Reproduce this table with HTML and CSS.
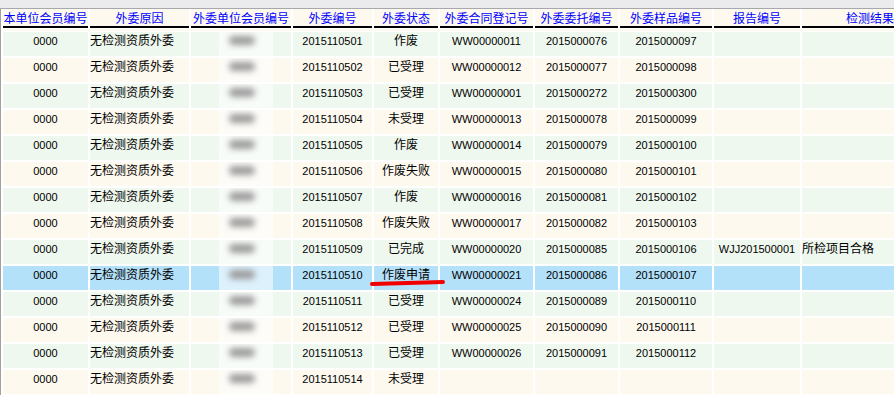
FILE: index.html
```html
<!DOCTYPE html>
<html lang="zh-CN">
<head>
<meta charset="utf-8">
<title>外委列表</title>
<link rel="stylesheet" href="styles.css">
</head>
<body>
<div class="topbar"></div>
<div class="grid">
  <div class="row head">
    <div class="c">本单位会员编号</div><div class="c">外委原因</div><div class="c">外委单位会员编号</div><div class="c">外委编号</div><div class="c">外委状态</div><div class="c">外委合同登记号</div><div class="c">外委委托编号</div><div class="c">外委样品编号</div><div class="c">报告编号</div><div class="c">检测结果描述</div>
  </div>
  <div class="row filler">
    <div class="c"></div><div class="c"></div><div class="c"></div><div class="c"></div><div class="c"></div><div class="c"></div><div class="c"></div><div class="c"></div><div class="c"></div><div class="c"></div>
  </div>

  <div class="row g">
    <div class="c n">0000</div><div class="c t">无检测资质外委</div><div class="c m"><span class="mask"><span class="blob"></span></span></div><div class="c n">2015110501</div><div class="c s">作废</div><div class="c n">WW00000011</div><div class="c n">2015000076</div><div class="c n">2015000097</div><div class="c n"></div><div class="c t"></div>
  </div>
  <div class="row y">
    <div class="c n">0000</div><div class="c t">无检测资质外委</div><div class="c m"><span class="mask"><span class="blob"></span></span></div><div class="c n">2015110502</div><div class="c s">已受理</div><div class="c n">WW00000012</div><div class="c n">2015000077</div><div class="c n">2015000098</div><div class="c n"></div><div class="c t"></div>
  </div>
  <div class="row g">
    <div class="c n">0000</div><div class="c t">无检测资质外委</div><div class="c m"><span class="mask"><span class="blob"></span></span></div><div class="c n">2015110503</div><div class="c s">已受理</div><div class="c n">WW00000001</div><div class="c n">2015000272</div><div class="c n">2015000300</div><div class="c n"></div><div class="c t"></div>
  </div>
  <div class="row y">
    <div class="c n">0000</div><div class="c t">无检测资质外委</div><div class="c m"><span class="mask"><span class="blob"></span></span></div><div class="c n">2015110504</div><div class="c s">未受理</div><div class="c n">WW00000013</div><div class="c n">2015000078</div><div class="c n">2015000099</div><div class="c n"></div><div class="c t"></div>
  </div>
  <div class="row g">
    <div class="c n">0000</div><div class="c t">无检测资质外委</div><div class="c m"><span class="mask"><span class="blob"></span></span></div><div class="c n">2015110505</div><div class="c s">作废</div><div class="c n">WW00000014</div><div class="c n">2015000079</div><div class="c n">2015000100</div><div class="c n"></div><div class="c t"></div>
  </div>
  <div class="row y">
    <div class="c n">0000</div><div class="c t">无检测资质外委</div><div class="c m"><span class="mask"><span class="blob"></span></span></div><div class="c n">2015110506</div><div class="c s">作废失败</div><div class="c n">WW00000015</div><div class="c n">2015000080</div><div class="c n">2015000101</div><div class="c n"></div><div class="c t"></div>
  </div>
  <div class="row g">
    <div class="c n">0000</div><div class="c t">无检测资质外委</div><div class="c m"><span class="mask"><span class="blob"></span></span></div><div class="c n">2015110507</div><div class="c s">作废</div><div class="c n">WW00000016</div><div class="c n">2015000081</div><div class="c n">2015000102</div><div class="c n"></div><div class="c t"></div>
  </div>
  <div class="row y">
    <div class="c n">0000</div><div class="c t">无检测资质外委</div><div class="c m"><span class="mask"><span class="blob"></span></span></div><div class="c n">2015110508</div><div class="c s">作废失败</div><div class="c n">WW00000017</div><div class="c n">2015000082</div><div class="c n">2015000103</div><div class="c n"></div><div class="c t"></div>
  </div>
  <div class="row g">
    <div class="c n">0000</div><div class="c t">无检测资质外委</div><div class="c m"><span class="mask"><span class="blob"></span></span></div><div class="c n">2015110509</div><div class="c s">已完成</div><div class="c n">WW00000020</div><div class="c n">2015000085</div><div class="c n">2015000106</div><div class="c n">WJJ201500001</div><div class="c t">所检项目合格</div>
  </div>
  <div class="row sel">
    <div class="c n">0000</div><div class="c t">无检测资质外委</div><div class="c m"><span class="mask"><span class="blob"></span></span></div><div class="c n">2015110510</div><div class="c s">作废申请</div><div class="c n">WW00000021</div><div class="c n">2015000086</div><div class="c n">2015000107</div><div class="c n"></div><div class="c t"></div>
  </div>
  <div class="row g">
    <div class="c n">0000</div><div class="c t">无检测资质外委</div><div class="c m"><span class="mask"><span class="blob"></span></span></div><div class="c n">2015110511</div><div class="c s">已受理</div><div class="c n">WW00000024</div><div class="c n">2015000089</div><div class="c n">2015000110</div><div class="c n"></div><div class="c t"></div>
  </div>
  <div class="row y">
    <div class="c n">0000</div><div class="c t">无检测资质外委</div><div class="c m"><span class="mask"><span class="blob"></span></span></div><div class="c n">2015110512</div><div class="c s">已受理</div><div class="c n">WW00000025</div><div class="c n">2015000090</div><div class="c n">2015000111</div><div class="c n"></div><div class="c t"></div>
  </div>
  <div class="row g">
    <div class="c n">0000</div><div class="c t">无检测资质外委</div><div class="c m"><span class="mask"><span class="blob"></span></span></div><div class="c n">2015110513</div><div class="c s">已受理</div><div class="c n">WW00000026</div><div class="c n">2015000091</div><div class="c n">2015000112</div><div class="c n"></div><div class="c t"></div>
  </div>
  <div class="row y">
    <div class="c n">0000</div><div class="c t">无检测资质外委</div><div class="c m"><span class="mask"><span class="blob"></span></span></div><div class="c n">2015110514</div><div class="c s">未受理</div><div class="c n"></div><div class="c n"></div><div class="c n"></div><div class="c n"></div><div class="c t"></div>
  </div>
</div>
<div class="mark"></div>
</body>
</html>
```

FILE: styles.css
```css
html, body {
  margin: 0;
  padding: 0;
  overflow: hidden;
  background: #ffffff;
  width: 894px;
  height: 395px;
}
body {
  font-family: "Noto Sans CJK SC", "Liberation Sans", sans-serif;
  font-size: 12px;
  color: #000;
}
.topbar {
  height: 8px;
  background: #ebebee;
  border-bottom: 1px solid #a7a7ae;
}
.grid {
  display: flex;
  flex-direction: column;
  border-left: 1px solid #a0a0a0;
  padding-left: 2px;
  width: 1100px;
}
.row {
  display: grid;
  grid-template-columns: 85px 99px 100px 79px 64px 93px 83px 92px 86px 160px;
  column-gap: 2px;
  height: 24px;
  margin-bottom: 2px;
}
.c {
  overflow: hidden;
  white-space: nowrap;
  line-height: 14px;
  padding-top: 1px;
  box-sizing: border-box;
}
.head {
  height: 19px;
  margin-bottom: 1px;
}
.head .c {
  background: #fdf9ef;
  color: #0000ff;
  text-align: center;
  border-bottom: 2px solid #000;
  padding-top: 2px;
  line-height: 14px;
}
.filler {
  height: 2px;
  margin-bottom: 1px;
}
.filler .c { background: #fdf9ef; padding: 0; }
.g .c { background: #eff8ef; }
.y .c { background: #fdf9ef; }
.sel .c { background: #b3e1fa; }
.n {
  font-family: "Liberation Sans", sans-serif;
  font-size: 11px;
  text-align: center;
  padding-top: 2px;
}
.s { text-align: center; }
.t { text-align: left; }
.m {
  display: flex;
  padding: 0 0 0 28px;
}
.mask {
  display: flex;
  justify-content: center;
  width: 54px;
  height: 24px;
  background: rgba(255, 255, 255, 0.55);
  padding-top: 4px;
  box-sizing: border-box;
}
.blob {
  display: block;
  width: 26px;
  height: 9px;
  border-radius: 5px;
  background: #9a9a9a;
  filter: blur(3px);
  margin-right: 8px;
}
.mark {
  position: absolute;
  left: 370px;
  top: 281px;
  width: 75px;
  height: 4px;
  border-radius: 2px;
  background: #f00000;
  transform: rotate(-1.5deg);
}
```
